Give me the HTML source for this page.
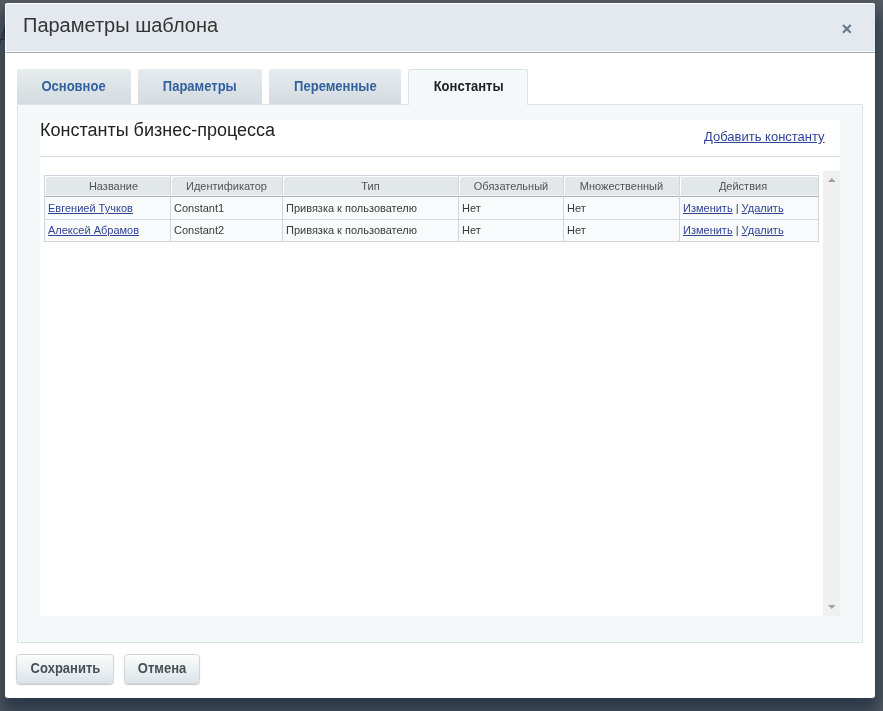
<!DOCTYPE html>
<html><head><meta charset="utf-8">
<style>
*{box-sizing:border-box;margin:0;padding:0}
html,body{width:883px;height:711px;overflow:hidden}
body{font-family:"Liberation Sans",sans-serif;position:relative;background:#585c64}
#root{position:absolute;left:0;top:0;width:883px;height:711px;will-change:transform}
.a{position:absolute;white-space:nowrap}
#dlg{position:absolute;left:5px;top:3px;width:870px;height:695px;background:#fff;border-radius:3px;
box-shadow:0 12px 16px 5px rgba(40,56,70,.92)}
#hdr{position:absolute;left:5px;top:3px;width:870px;height:50px;background:#e3e9ef;border-bottom:1px solid #a7acb1;
border-top:1px solid #fff;border-left:1px solid #fff;box-shadow:inset 0 -1px 0 #f4f7f9;border-radius:3px 3px 0 0}
#title{left:23px;top:14px;font-size:20px;color:#353535}
.tab{position:absolute;top:69px;height:35px;background:linear-gradient(180deg,#e6ebee,#d4dce1);border-radius:2px 2px 0 0;
font-size:13px;font-weight:bold;color:#33609e;text-align:center;line-height:34px}
.tab.act{background:#f5f8f9;border:1px solid #dae4e6;border-bottom:none;color:#222;height:36px;line-height:33px}
#cont{position:absolute;left:17px;top:104px;width:846px;height:539px;background:#f5f8f9;border:1px solid #dae4e6}
#panel{position:absolute;left:40px;top:120px;width:800px;height:496px;background:#fff}
#ptitle{left:40px;top:120px;font-size:18px;color:#222}
#addlink{left:704px;top:129px;font-size:13px;color:#2f4597;text-decoration:underline}
.ln{position:absolute}
.sc{display:inline-block;font-size:14px;transform:scaleX(.93)}
.th{position:absolute;top:176px;height:19px;background:#e2e8e9;box-shadow:inset 1px 1px 0 #fff;
font-size:11px;color:#535353;text-align:center;line-height:21px;border-radius:2px 2px 0 0}
.td{position:absolute;font-size:11px;color:#3a3a3a;white-space:nowrap}
.lk{color:#2f4597;text-decoration:underline}
#sb{position:absolute;left:823px;top:171px;width:17px;height:445px;background:#f0f0f0}
.btn{position:absolute;top:654px;height:30px;border:1px solid #d2d6d9;border-radius:4px;
background:linear-gradient(180deg,#fbfcfc,#dce4e8);font-size:13px;font-weight:bold;color:#475056;text-align:center;line-height:26px;
box-shadow:0 1px 1px rgba(0,0,0,.22)}
</style></head><body>
<div id="root">
  <div id="dlg"></div>
  <svg class="a" style="left:0;top:20px" width="6" height="30"><path d="M4.5 6V19.5M4.5 8L1 19.5M0 19.5H5" stroke="#222b35" stroke-width="1" fill="none"/><path d="M0.5 20V25" stroke="#2a3a48" stroke-width="1"/></svg>
  <div id="hdr"></div>
  <div id="title" class="a">Параметры шаблона</div>
  <svg class="a" style="left:839.5px;top:21.8px" width="14" height="14" viewBox="0 0 14 14"><path d="M3 3L10.7 10.7M10.7 3L3 10.7" stroke="#6b7a8c" stroke-width="2.2"/></svg>

  <div class="tab" style="left:17px;width:114px"><span class="sc">Основное</span></div>
  <div class="tab" style="left:138px;width:124px"><span class="sc">Параметры</span></div>
  <div class="tab" style="left:269px;width:132px"><span class="sc">Переменные</span></div>
  <div id="cont"></div>
  <div class="tab act" style="left:408px;width:120px;padding-left:2px"><span class="sc">Константы</span></div>
  <div id="panel"></div>
  <div id="ptitle" class="a">Константы бизнес-процесса</div>
  <div id="addlink" class="a">Добавить константу</div>
  <div class="ln" style="left:40px;top:156px;width:800px;height:1px;background:#d9dbdc"></div>

  <!-- table -->
  <div class="ln" style="left:45px;top:197px;width:773px;height:44px;background:#f9fafb"></div>
  <div class="th" style="left:45px;width:125px;padding-left:12px">Название</div>
  <div class="th" style="left:171px;width:111px">Идентификатор</div>
  <div class="th" style="left:283px;width:175px">Тип</div>
  <div class="th" style="left:459px;width:104px">Обязательный</div>
  <div class="th" style="left:564px;width:115px">Множественный</div>
  <div class="th" style="left:680px;width:138px;padding-right:12px">Действия</div>
  <div class="ln" style="left:44px;top:195px;width:775px;height:1px;background:#f2f4f7"></div>
  <div class="ln" style="left:44px;top:196px;width:775px;height:1px;background:#abb1bc"></div>
  <div class="ln" style="left:44px;top:175px;width:775px;height:1px;background:#d0d4e1"></div>
  <div class="ln" style="left:44px;top:219px;width:775px;height:1px;background:#d6dae6"></div>
  <div class="ln" style="left:44px;top:241px;width:775px;height:1px;background:#d0d4e1"></div>
  <div class="ln" style="left:44px;top:175px;width:1px;height:67px;background:#d0d4e1"></div>
  <div class="ln" style="left:170px;top:175px;width:1px;height:67px;background:#d2d6e3"></div>
  <div class="ln" style="left:282px;top:175px;width:1px;height:67px;background:#d2d6e3"></div>
  <div class="ln" style="left:458px;top:175px;width:1px;height:67px;background:#d2d6e3"></div>
  <div class="ln" style="left:563px;top:175px;width:1px;height:67px;background:#d2d6e3"></div>
  <div class="ln" style="left:679px;top:175px;width:1px;height:67px;background:#d2d6e3"></div>
  <div class="ln" style="left:818px;top:175px;width:1px;height:67px;background:#d0d4e1"></div>

  <div class="td" style="left:48px;top:202px"><span class="lk">Евгенией Тучков</span></div>
  <div class="td" style="left:174px;top:202px">Constant1</div>
  <div class="td" style="left:286px;top:202px">Привязка к пользователю</div>
  <div class="td" style="left:462px;top:202px">Нет</div>
  <div class="td" style="left:567px;top:202px">Нет</div>
  <div class="td" style="left:683px;top:202px"><span class="lk">Изменить</span> | <span class="lk">Удалить</span></div>

  <div class="td" style="left:48px;top:224px"><span class="lk">Алексей Абрамов</span></div>
  <div class="td" style="left:174px;top:224px">Constant2</div>
  <div class="td" style="left:286px;top:224px">Привязка к пользователю</div>
  <div class="td" style="left:462px;top:224px">Нет</div>
  <div class="td" style="left:567px;top:224px">Нет</div>
  <div class="td" style="left:683px;top:224px"><span class="lk">Изменить</span> | <span class="lk">Удалить</span></div>

  <div id="sb">
    <svg class="a" style="left:4.9px;top:6.8px" width="8" height="5"><path d="M0 4L3.8 0L7.6 4Z" fill="#a0a0a0"/></svg>
    <svg class="a" style="left:5px;top:434px" width="8" height="5"><path d="M0 0L7.6 0L3.8 4Z" fill="#a0a0a0"/></svg>
  </div>
  <div class="btn" style="left:16px;width:98px"><span class="sc">Сохранить</span></div>
  <div class="btn" style="left:124px;width:76px"><span class="sc">Отмена</span></div>
</div>
</body></html>
